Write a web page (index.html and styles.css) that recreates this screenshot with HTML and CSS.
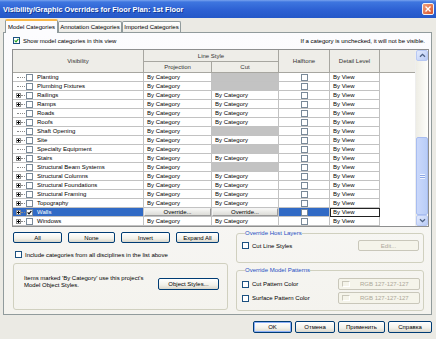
FILE: index.html
```html
<!DOCTYPE html>
<html lang="en">
<head>
    <meta charset="UTF-8">
    <meta name="viewport" content="width=device-width, initial-scale=1.0">
    <title>Visibility/Graphic Overrides</title>
    <link rel="stylesheet" href="styles.css">
</head>
<body>
<div class="window">
    <div class="titlebar">
        <span class="title">Visibility/Graphic Overrides for Floor Plan: 1st Floor</span>
        <span class="close">
            <svg width="8" height="8" viewBox="0 0 8 8"><path d="M1.5 1.5 L6.5 6.5 M6.5 1.5 L1.5 6.5" stroke="#fff" stroke-width="1.4"/></svg>
        </span>
    </div>

    <div class="client">
        <div class="tabs">
            <div class="tab active">Model Categories</div>
            <div class="tab tab-annot">Annotation Categories</div>
            <div class="tab tab-import">Imported Categories</div>
        </div>

        <div class="panel">
            <div class="top-row">
                <label class="check"><span class="box checked"><svg width="5" height="5" viewBox="0 0 5 5"><path d="M0.6 2.4 L2 3.8 L4.4 0.9" stroke="#21a121" stroke-width="1.2" fill="none"/></svg></span>Show model categories in this view</label>
                <span class="hint">If a category is unchecked, it will not be visible.</span>
            </div>

            <div class="grid">
                <div class="grid-main">
                    <div class="head">
                        <div class="hcell h-vis">Visibility</div>
                        <div class="hcell h-line">Line Style</div>
                        <div class="hcell h-proj">Projection</div>
                        <div class="hcell h-cut">Cut</div>
                        <div class="hcell h-half">Halftone</div>
                        <div class="hcell h-det">Detail Level</div>
                        <div class="hcell h-fill"></div>
                    </div>

                    <div class="row">
                        <div class="cell vis"><span class="tree-line long"></span><span class="box"></span><span class="name">Planting</span></div>
                        <div class="cell">By Category</div>
                        <div class="cell shaded"></div>
                        <div class="cell center"><span class="box"></span></div>
                        <div class="cell">By View</div>
                        <div class="cell filler"></div>
                    </div>
                    <div class="row">
                        <div class="cell vis"><span class="tree-line long"></span><span class="box"></span><span class="name">Plumbing Fixtures</span></div>
                        <div class="cell">By Category</div>
                        <div class="cell shaded"></div>
                        <div class="cell center"><span class="box"></span></div>
                        <div class="cell">By View</div>
                        <div class="cell filler"></div>
                    </div>
                    <div class="row">
                        <div class="cell vis"><span class="expander"></span><span class="tree-line"></span><span class="box"></span><span class="name">Railings</span></div>
                        <div class="cell">By Category</div>
                        <div class="cell">By Category</div>
                        <div class="cell center"><span class="box"></span></div>
                        <div class="cell">By View</div>
                        <div class="cell filler"></div>
                    </div>
                    <div class="row">
                        <div class="cell vis"><span class="expander"></span><span class="tree-line"></span><span class="box"></span><span class="name">Ramps</span></div>
                        <div class="cell">By Category</div>
                        <div class="cell">By Category</div>
                        <div class="cell center"><span class="box"></span></div>
                        <div class="cell">By View</div>
                        <div class="cell filler"></div>
                    </div>
                    <div class="row">
                        <div class="cell vis"><span class="tree-line long"></span><span class="box"></span><span class="name">Roads</span></div>
                        <div class="cell">By Category</div>
                        <div class="cell">By Category</div>
                        <div class="cell center"><span class="box"></span></div>
                        <div class="cell">By View</div>
                        <div class="cell filler"></div>
                    </div>
                    <div class="row">
                        <div class="cell vis"><span class="expander"></span><span class="tree-line"></span><span class="box"></span><span class="name">Roofs</span></div>
                        <div class="cell">By Category</div>
                        <div class="cell">By Category</div>
                        <div class="cell center"><span class="box"></span></div>
                        <div class="cell">By View</div>
                        <div class="cell filler"></div>
                    </div>
                    <div class="row">
                        <div class="cell vis"><span class="tree-line long"></span><span class="box"></span><span class="name">Shaft Opening</span></div>
                        <div class="cell">By Category</div>
                        <div class="cell shaded"></div>
                        <div class="cell center"><span class="box"></span></div>
                        <div class="cell">By View</div>
                        <div class="cell filler"></div>
                    </div>
                    <div class="row">
                        <div class="cell vis"><span class="expander"></span><span class="tree-line"></span><span class="box"></span><span class="name">Site</span></div>
                        <div class="cell">By Category</div>
                        <div class="cell">By Category</div>
                        <div class="cell center"><span class="box"></span></div>
                        <div class="cell">By View</div>
                        <div class="cell filler"></div>
                    </div>
                    <div class="row">
                        <div class="cell vis"><span class="tree-line long"></span><span class="box"></span><span class="name">Specialty Equipment</span></div>
                        <div class="cell">By Category</div>
                        <div class="cell shaded"></div>
                        <div class="cell center"><span class="box"></span></div>
                        <div class="cell">By View</div>
                        <div class="cell filler"></div>
                    </div>
                    <div class="row">
                        <div class="cell vis"><span class="expander"></span><span class="tree-line"></span><span class="box"></span><span class="name">Stairs</span></div>
                        <div class="cell">By Category</div>
                        <div class="cell">By Category</div>
                        <div class="cell center"><span class="box"></span></div>
                        <div class="cell">By View</div>
                        <div class="cell filler"></div>
                    </div>
                    <div class="row">
                        <div class="cell vis"><span class="tree-line long"></span><span class="box"></span><span class="name">Structural Beam Systems</span></div>
                        <div class="cell">By Category</div>
                        <div class="cell shaded"></div>
                        <div class="cell center"><span class="box"></span></div>
                        <div class="cell">By View</div>
                        <div class="cell filler"></div>
                    </div>
                    <div class="row">
                        <div class="cell vis"><span class="expander"></span><span class="tree-line"></span><span class="box"></span><span class="name">Structural Columns</span></div>
                        <div class="cell">By Category</div>
                        <div class="cell">By Category</div>
                        <div class="cell center"><span class="box"></span></div>
                        <div class="cell">By View</div>
                        <div class="cell filler"></div>
                    </div>
                    <div class="row">
                        <div class="cell vis"><span class="expander"></span><span class="tree-line"></span><span class="box"></span><span class="name">Structural Foundations</span></div>
                        <div class="cell">By Category</div>
                        <div class="cell">By Category</div>
                        <div class="cell center"><span class="box"></span></div>
                        <div class="cell">By View</div>
                        <div class="cell filler"></div>
                    </div>
                    <div class="row">
                        <div class="cell vis"><span class="expander"></span><span class="tree-line"></span><span class="box"></span><span class="name">Structural Framing</span></div>
                        <div class="cell">By Category</div>
                        <div class="cell">By Category</div>
                        <div class="cell center"><span class="box"></span></div>
                        <div class="cell">By View</div>
                        <div class="cell filler"></div>
                    </div>
                    <div class="row">
                        <div class="cell vis"><span class="expander"></span><span class="tree-line"></span><span class="box"></span><span class="name">Topography</span></div>
                        <div class="cell">By Category</div>
                        <div class="cell">By Category</div>
                        <div class="cell center"><span class="box"></span></div>
                        <div class="cell">By View</div>
                        <div class="cell filler"></div>
                    </div>
                    <div class="row selected">
                        <div class="cell vis"><span class="expander"></span><span class="tree-line"></span><span class="box checked"><svg width="5" height="5" viewBox="0 0 5 5"><path d="M0.6 2.4 L2 3.8 L4.4 0.9" stroke="#000" stroke-width="1.2" fill="none"/></svg></span><span class="name">Walls</span></div>
                        <div class="cell btn-cell"><span class="cell-btn">Override...</span></div>
                        <div class="cell btn-cell"><span class="cell-btn">Override...</span></div>
                        <div class="cell center"><span class="box"></span></div>
                        <div class="cell editing">By View</div>
                        <div class="cell filler"></div>
                    </div>
                    <div class="row">
                        <div class="cell vis"><span class="expander"></span><span class="tree-line"></span><span class="box"></span><span class="name">Windows</span></div>
                        <div class="cell">By Category</div>
                        <div class="cell">By Category</div>
                        <div class="cell center"><span class="box"></span></div>
                        <div class="cell">By View</div>
                        <div class="cell filler"></div>
                    </div>
                </div>

                <div class="scrollbar">
                    <div class="sb-btn"><svg width="7" height="5" viewBox="0 0 7 5"><path d="M1 3.8 L3.5 1.3 L6 3.8" stroke="#4d6185" stroke-width="1.3" fill="none"/></svg></div>
                    <div class="sb-track"></div>
                    <div class="sb-thumb"><span class="grip"></span></div>
                    <div class="sb-btn"><svg width="7" height="5" viewBox="0 0 7 5"><path d="M1 1.2 L3.5 3.7 L6 1.2" stroke="#4d6185" stroke-width="1.3" fill="none"/></svg></div>
                </div>
            </div>

            <div class="lower">
                <div class="lower-left">
                    <div class="btn-row">
                        <button class="btn b-all">All</button>
                        <button class="btn b-none">None</button>
                        <button class="btn b-invert">Invert</button>
                        <button class="btn b-expand">Expand All</button>
                    </div>
                    <label class="check include"><span class="box"></span>Include categories from all disciplines in the list above</label>
                    <div class="group info">
                        <p>Items marked 'By Category' use this project's<br>Model Object Styles.</p>
                        <button class="btn b-styles">Object Styles...</button>
                    </div>
                </div>

                <div class="lower-right">
                    <fieldset class="group host">
                        <legend>Override Host Layers</legend>
                        <div class="opt-row">
                            <label class="check"><span class="box"></span>Cut Line Styles</label>
                            <button class="btn disabled b-edit">Edit...</button>
                        </div>
                    </fieldset>
                    <fieldset class="group patterns">
                        <legend>Override Model Patterns</legend>
                        <div class="opt-row">
                            <label class="check"><span class="box"></span>Cut Pattern Color</label>
                            <button class="btn disabled b-rgb"><span class="swatch"></span>RGB 127-127-127</button>
                        </div>
                        <div class="opt-row">
                            <label class="check"><span class="box"></span>Surface Pattern Color</label>
                            <button class="btn disabled b-rgb"><span class="swatch"></span>RGB 127-127-127</button>
                        </div>
                    </fieldset>
                </div>
            </div>
        </div>

        <div class="dialog-buttons">
            <button class="btn default b-ok">OK</button>
            <button class="btn b-cancel">Отмена</button>
            <button class="btn b-apply">Применить</button>
            <button class="btn b-help">Справка</button>
        </div>
    </div>
</div>
</body>
</html>
```

FILE: styles.css
```css
* {
    margin: 0;
    padding: 0;
    box-sizing: border-box;
}

body {
    width: 436px;
    height: 339px;
    overflow: hidden;
    font-family: 'Liberation Sans', Arial, sans-serif;
    font-size: 6px;
    color: #000;
    background-color: #ebeae4;
}

.window {
    height: 339px;
    display: flex;
    flex-direction: column;
}

/* title bar */
.titlebar {
    height: 18px;
    display: flex;
    align-items: center;
    justify-content: space-between;
    padding: 0 2px 0 3px;
    background: linear-gradient(#78a3ee 0, #3e76df 2px, #2d61d3 55%, #2458c8 100%);
}

.title {
    color: white;
    font-weight: bold;
    font-size: 7.3px;
    text-shadow: 1px 1px 0 #123c95;
}

.close {
    width: 12px;
    height: 12px;
    display: flex;
    align-items: center;
    justify-content: center;
    border: 1px solid #f4f4f4;
    border-radius: 2px;
    background: linear-gradient(135deg, #f1a27e, #d8522a);
}

/* client area */
.client {
    flex: 1;
    display: flex;
    flex-direction: column;
    padding: 1px 4px 0 3px;
}

.tabs {
    display: flex;
    align-items: flex-end;
    height: 14px;
    padding-left: 2px;
    margin-bottom: -1px;
    position: relative;
    z-index: 1;
}

.tab {
    height: 11px;
    line-height: 10px;
    text-align: center;
    border: 1px solid #919b9c;
    border-bottom: none;
    border-radius: 2px 2px 0 0;
    background: linear-gradient(#ffffff, #ecebe6);
    width: 64px;
    margin-bottom: 1px;
}

.tab.active {
    width: 53px;
    height: 14px;
    line-height: 12px;
    margin-bottom: 0;
    background: #fcfcfe;
    border-top: 2px solid #f7b74a;
}

.tab-import {
    width: 59px;
}

.panel {
    height: 283px;
    border: 1px solid #919b9c;
    background: linear-gradient(#fcfcfe, #f4f3ee);
    padding: 3px 0 0 8px;
}

.top-row {
    height: 9px;
    display: flex;
    align-items: center;
    justify-content: space-between;
    padding-left: 1px;
    padding-right: 6px;
}

.check {
    display: flex;
    align-items: center;
    white-space: nowrap;
}

.box {
    width: 7px;
    height: 7px;
    flex: none;
    border: 1px solid #7a8a99;
    background: white;
    display: inline-flex;
    align-items: center;
    justify-content: center;
}

.check .box {
    margin-right: 3px;
    border-color: #1c5180;
}

/* grid */
.grid {
    margin-top: 4px;
    width: 417px;
    height: 178px;
    border: 1px solid #8e8f8f;
    display: flex;
    background: white;
}

.grid-main {
    width: 402px;
}

.head {
    display: grid;
    grid-template-columns: 131px 68px 67px 51px 50px 35px;
    grid-template-rows: 12px 11px;
    background: #eeede8;
    color: #333;
}

.hcell {
    display: flex;
    align-items: center;
    justify-content: center;
    border-right: 1px solid #a7a6a0;
    border-bottom: 1px solid #a7a6a0;
}

.h-vis { grid-row: 1 / 3; grid-column: 1; }
.h-line { grid-row: 1; grid-column: 2 / 4; }
.h-proj { grid-row: 2; grid-column: 2; }
.h-cut { grid-row: 2; grid-column: 3; }
.h-half { grid-row: 1 / 3; grid-column: 4; }
.h-det { grid-row: 1 / 3; grid-column: 5; }
.h-fill { grid-row: 1 / 3; grid-column: 6; border-right: none; }

.row {
    display: grid;
    grid-template-columns: 131px 68px 67px 51px 50px 35px;
    height: 9px;
}

.cell {
    height: 9px;
    line-height: 8px;
    padding-left: 3px;
    white-space: nowrap;
    overflow: hidden;
    border-right: 1px solid #c2c2c2;
    border-bottom: 1px solid #c2c2c2;
}

.cell.filler {
    border: none;
}

.cell.shaded {
    background-color: #c3c3c3;
}

.cell.center {
    display: flex;
    align-items: center;
    justify-content: center;
    padding-left: 0;
}

.cell.vis {
    display: flex;
    align-items: center;
    padding-left: 3px;
}

.expander {
    width: 5px;
    height: 5px;
    flex: none;
    border: 1px solid #8e8e8e;
    background:
        linear-gradient(#000, #000) center / 3px 1px no-repeat,
        linear-gradient(#000, #000) center / 1px 3px no-repeat,
        #fff;
}

.tree-line {
    width: 4px;
    flex: none;
    border-top: 1px dotted #8a8a8a;
}

.tree-line.long {
    width: 8px;
    margin-left: 1px;
}

.vis .box {
    margin-left: 1px;
}

.name {
    margin-left: 4px;
}

.row.selected .vis,
.row.selected .center {
    background-color: #316ac5;
    color: white;
}

.row.selected .vis .name {
    color: white;
}

.cell.btn-cell {
    padding: 0;
    display: flex;
}

.cell-btn {
    flex: 1;
    text-align: center;
    line-height: 7px;
    background: linear-gradient(#f6f6f4, #dcdcd8);
    border: 1px solid #9a9a9a;
    border-top-color: #f4f4f4;
    border-left-color: #f4f4f4;
}

.cell.editing {
    border: 1px solid #222;
    line-height: 7px;
    padding-left: 2px;
}

/* scrollbar */
.scrollbar {
    width: 13px;
    display: flex;
    flex-direction: column;
    background: linear-gradient(90deg, #eeede5, #fefefb);
    border-left: 1px solid #eeeeee;
}

.sb-btn {
    height: 11px;
    flex: none;
    display: flex;
    align-items: center;
    justify-content: center;
    background: linear-gradient(135deg, #e4ebfd, #b8cbf6);
    border: 1px solid #b7c8f4;
    border-radius: 2px;
}

.sb-track {
    flex: 1;
}

.sb-thumb {
    height: 78px;
    flex: none;
    display: flex;
    align-items: center;
    justify-content: center;
    background: linear-gradient(90deg, #cad8fb, #b9cdf7);
    border: 1px solid #a8bdf0;
    border-radius: 2px;
}

.grip {
    width: 5px;
    height: 5px;
    background: repeating-linear-gradient(#eef3fe 0 1px, #8ca7e4 1px 2px);
}

/* lower area */
.lower {
    display: flex;
    margin-top: 3px;
    padding-left: 1px;
}

.lower-left {
    width: 216px;
    padding-top: 2px;
}

.btn-row {
    display: flex;
    gap: 6px;
}

.btn {
    height: 11px;
    font-family: inherit;
    font-size: 6px;
    color: #000;
    border: 1px solid #003c74;
    border-radius: 2px;
    background: linear-gradient(#ffffff, #f2f1ea 60%, #d9d6cb);
    cursor: pointer;
}

.b-all { width: 49px; }
.b-none { width: 47px; }
.b-invert { width: 49px; }
.b-expand { width: 43px; }

.include {
    height: 9px;
    margin-top: 7px;
    padding-left: 2px;
}

.group {
    border: 1px solid #d0d0bf;
    border-radius: 3px;
}

.info {
    margin-top: 4px;
    width: 215px;
    height: 47px;
    display: flex;
    align-items: flex-start;
    justify-content: space-between;
    padding: 11px 8px 0 10px;
}

.info p {
    line-height: 7px;
}

.b-styles {
    width: 61px;
    height: 12px;
    margin-top: 3px;
}

.lower-right {
    width: 188px;
    margin-left: 7px;
}

legend {
    color: #1f4fc2;
    line-height: 7px;
    margin-left: 3px;
}

.host {
    height: 33px;
    padding: 3px 4px 0 5px;
}

.patterns {
    height: 44px;
    margin-top: 4px;
    padding: 4px 3px 0 5px;
    display: flex;
    flex-direction: column;
    gap: 2px;
}

.opt-row {
    display: flex;
    align-items: center;
    justify-content: space-between;
}

.btn.disabled {
    color: #aca899;
    border-color: #c9c7ba;
    background: #f5f4ea;
}

.b-edit {
    width: 61px;
}

.b-rgb {
    width: 82px;
    height: 12px;
    display: flex;
    align-items: center;
    padding-left: 3px;
}

.swatch {
    width: 8px;
    height: 6px;
    margin-right: 10px;
    border: 1px solid #c9c7ba;
    border-right-color: #fff;
    border-bottom-color: #fff;
}

/* bottom buttons */
.dialog-buttons {
    display: flex;
    justify-content: flex-end;
    gap: 3px;
    padding-top: 6px;
    padding-right: 0;
}

.dialog-buttons .btn {
    height: 12px;
}

.b-ok { width: 39px; border-color: #003c74; box-shadow: inset 0 0 0 1px #8cb0f8; }
.b-cancel { width: 40px; }
.b-apply { width: 47px; }
.b-help { width: 44px; }
```
